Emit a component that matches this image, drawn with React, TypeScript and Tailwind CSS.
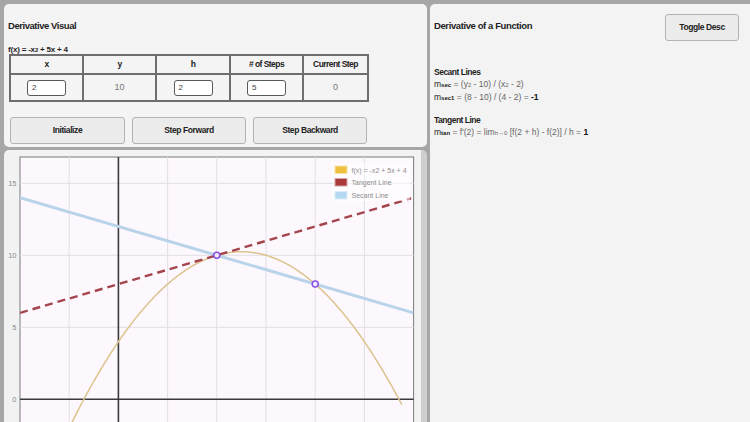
import React from "react"

const SANS = "font-['Liberation_Sans',Arial,sans-serif]"

// chart mapping (svg coords, svg sits at page x=4, y=150)
const px = (x: number) => 16 + 49.2 * (x + 2)
const py = (y: number) => 249.3 - 14.4 * y

function parabolaPath() {
  const pts: string[] = []
  for (let x = -1.2; x <= 5.78; x += 0.04) {
    const y = -x * x + 5 * x + 4
    pts.push(`${pts.length ? "L" : "M"}${px(x).toFixed(1)},${py(y).toFixed(1)}`)
  }
  return pts.join(" ")
}

function Chart() {
  const gridX = [-1, 1, 2, 3, 4, 5]
  const gridY = [5, 10, 15]
  return (
    <svg width="423" height="272" className="block">
      <rect x={px(-2)} y={7} width={px(6) - px(-2)} height={270} fill="#fdf8fd" stroke="#7a7a7a" strokeWidth="1" />
      {gridX.map((g) => (
        <line key={g} x1={px(g)} x2={px(g)} y1={7} y2={272} stroke="#e2dfe2" strokeWidth="1" />
      ))}
      {gridY.map((g) => (
        <line key={g} x1={px(-2)} x2={px(6)} y1={py(g)} y2={py(g)} stroke="#e2dfe2" strokeWidth="1" />
      ))}
      {[0, 5, 10, 15].map((g) => (
        <text key={g} x={12.5} y={py(g) + 2.5} textAnchor="end" fontSize="7.5" fill="#8a8a8a" fontFamily="Liberation Sans, Arial, sans-serif">
          {g}
        </text>
      ))}
      <line x1={px(0)} x2={px(0)} y1={7} y2={272} stroke="#3a3a3a" strokeWidth="1.6" />
      <line x1={px(-2)} x2={px(6)} y1={py(0)} y2={py(0)} stroke="#3a3a3a" strokeWidth="1.6" />

      <svg x={px(-2)} y={7} width={px(6) - px(-2)} height={265} overflow="hidden">
        <g transform={`translate(${-px(-2)},-7)`}>
          <line x1={px(-2)} y1={py(14)} x2={px(6)} y2={py(6)} stroke="#b9d4ea" strokeWidth="3" />
          <path d={parabolaPath()} fill="none" stroke="#dcc38e" strokeWidth="1.5" />
          <line x1={px(-2)} y1={py(6)} x2={px(5.95)} y2={py(13.95)} stroke="#a4454d" strokeWidth="2.4" strokeDasharray="8 5" />
        </g>
      </svg>

      <circle cx={px(2)} cy={py(10)} r="3" fill="#f3ecff" stroke="#8b4fe6" strokeWidth="1.5" />
      <circle cx={px(4)} cy={py(8)} r="3" fill="#f3ecff" stroke="#8b4fe6" strokeWidth="1.5" />

      <rect x="328" y="13" width="78" height="38" fill="#ffffff" opacity="0.5" />
      <rect x="331" y="16" width="12" height="7.5" fill="#efc03e" stroke="#f7e2a6" strokeWidth="1" />
      <rect x="331" y="28.5" width="12" height="7.5" fill="#a83a3c" stroke="#d9a5a5" strokeWidth="1" />
      <rect x="331" y="41.5" width="12" height="7.5" fill="#b4d9f3" stroke="#dcedf9" strokeWidth="1" />
      <g fontSize="7" fill="#8d8d8d" fontFamily="Liberation Sans, Arial, sans-serif">
        <text x="347.5" y="22.5">f(x) = -x2 + 5x + 4</text>
        <text x="347.5" y="35">Tangent Line</text>
        <text x="347.5" y="48">Secant Line</text>
      </g>
    </svg>
  )
}

function Input({ value }: { value: string }) {
  return (
    <div className={`w-[39px] h-[16px] rounded-[3px] border border-[#5a5a5a] bg-white text-[8px] text-[#444] px-[4px] leading-[14px] ${SANS}`}>
      {value}
    </div>
  )
}

function Btn({ label, w }: { label: string; w: string }) {
  return (
    <div className={`${w} h-[27px] rounded-[3px] border border-[#b3b3b3] bg-[#ececec] flex items-center justify-center text-[8.5px] tracking-[-0.4px] font-bold text-[#222] ${SANS}`}>
      {label}
    </div>
  )
}

function Sub({ children }: { children: React.ReactNode }) {
  return <span className="text-[6px] font-bold">{children}</span>
}

export default function App() {
  const headers = ["x", "y", "h", "# of Steps", "Current Step"]
  return (
    <div className="w-[750px] h-[422px] overflow-hidden bg-[#a6a6a6] flex gap-[3px] pt-[4px] pl-[4px]">
      <div className="w-[423px] flex flex-col gap-[3px]">
        <div className="h-[143px] rounded-[5px] bg-[#f4f4f4] pl-[4px] pt-[16px]">
          <div className={`text-[9.5px] leading-[12px] tracking-[-0.45px] font-bold text-[#1e1e1e] ${SANS}`}>Derivative Visual</div>
          <div className={`mt-[14px] text-[8px] leading-[8px] font-bold tracking-[-0.2px] text-[#1e1e1e] ${SANS}`}>
            f(x) = -x<span className="text-[6px]">2</span> + 5x + 4
          </div>
          <div className="ml-[1px] mt-[0px] w-[360px] border-2 border-[#6e6e6e] grid grid-cols-[73px_73px_74px_73px_1fr]">
            {headers.map((h, i) => (
              <div key={h} className={`h-[19px] border-b-2 border-[#6e6e6e] ${i < 4 ? "border-r-2" : ""} flex items-center justify-center text-[8.5px] tracking-[-0.55px] font-bold text-[#222] ${SANS}`}>
                {h}
              </div>
            ))}
            {[<Input key="a" value="2" />, "10", <Input key="b" value="2" />, <Input key="c" value="5" />, "0"].map((c, i) => (
              <div key={i} className={`h-[25px] ${i < 4 ? "border-r-2 border-[#6e6e6e]" : ""} flex items-center justify-center text-[9px] text-[#777] ${SANS}`}>
                {c}
              </div>
            ))}
          </div>
          <div className="ml-[2px] mt-[15px] flex gap-[7px]">
            <Btn label="Initialize" w="w-[115px]" />
            <Btn label="Step Forward" w="w-[114px]" />
            <Btn label="Step Backward" w="w-[114px]" />
          </div>
        </div>
        <div className="flex-1 rounded-t-[5px] bg-[#f2f2f2] border-r-[6px] border-[#cfcfcf]">
          <Chart />
        </div>
      </div>
      <div className="flex-1 rounded-tl-[5px] bg-[#f3f3f3] pl-[4px] pr-[11px] pt-[10px]">
        <div className="flex justify-between items-start">
          <div className={`mt-[6px] text-[9.5px] leading-[12px] tracking-[-0.4px] font-bold text-[#1e1e1e] ${SANS}`}>Derivative of a Function</div>
          <div className={`w-[74px] h-[27px] rounded-[3px] border border-[#b3b3b3] bg-[#ececec] flex items-center justify-center text-[8.5px] tracking-[-0.4px] font-bold text-[#222] ${SANS}`}>
            Toggle Desc
          </div>
        </div>
        <div className={`mt-[25px] text-[8.5px] leading-[12px] tracking-[-0.5px] font-bold text-[#1e1e1e] ${SANS}`}>Secant Lines</div>
        <div className={`text-[8.5px] leading-[12px] text-[#666] ${SANS}`}>
          <span className="text-[#222]">m<Sub>sec</Sub></span> = (y<span className="text-[6px]">2</span> - 10) / (x<span className="text-[6px]">2</span> - 2)
        </div>
        <div className={`text-[8.5px] leading-[12px] text-[#666] ${SANS}`}>
          <span className="text-[#222]">m<Sub>sec1</Sub></span> = (8 - 10) / (4 - 2) = <span className="font-bold text-[#111]">-1</span>
        </div>
        <div className={`mt-[10px] text-[8.5px] leading-[12px] tracking-[-0.5px] font-bold text-[#1e1e1e] ${SANS}`}>Tangent Line</div>
        <div className={`text-[8.5px] leading-[12px] text-[#666] ${SANS}`}>
          <span className="text-[#222]">m<Sub>tan</Sub></span> = f'(2) = lim<span className="text-[6px]">h→0</span> [f(2 + h) - f(2)] / h = <span className="font-bold text-[#111]">1</span>
        </div>
      </div>
    </div>
  )
}
